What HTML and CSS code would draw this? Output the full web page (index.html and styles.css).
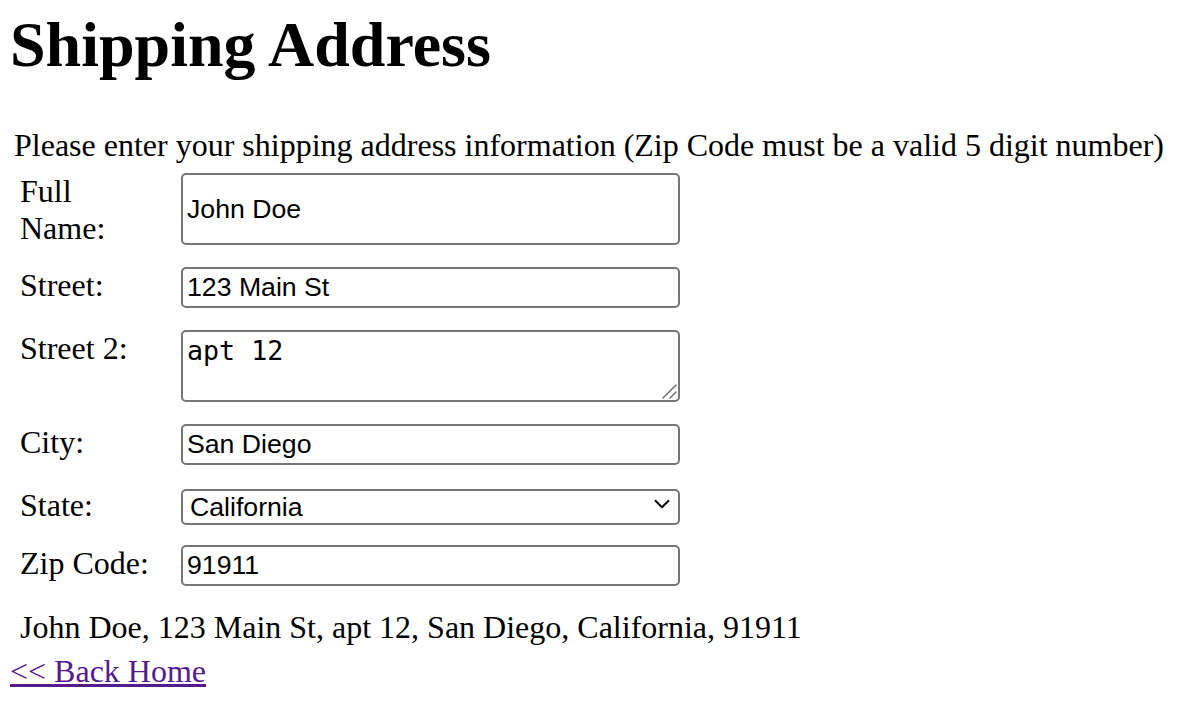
FILE: index.html
```html
<!DOCTYPE html>
<html lang="en">
<head>
<meta charset="utf-8">
<title>Shipping Address</title>
<link rel="stylesheet" href="styles.css">
</head>
<body>
<main class="page">
  <h1 class="title">Shipping Address</h1>
  <p class="intro">Please enter your shipping address information (Zip Code must be a valid 5 digit number)</p>
  <form class="address-form">
    <label class="field-label" for="full-name">Full Name:</label>
    <input id="full-name" class="field" type="text" value="John Doe">

    <label class="field-label" for="street">Street:</label>
    <input id="street" class="field" type="text" value="123 Main St">

    <label class="field-label" for="street2">Street 2:</label>
    <div class="area-wrap">
      <textarea id="street2" class="field field-area">apt 12</textarea>
      <svg class="grip" width="16" height="16" viewBox="0 0 16 16" aria-hidden="true"><path d="M2 15 L15 2 M9 15 L15 9" fill="none" stroke="#6e6e6e" stroke-width="1.5" stroke-linecap="round"/></svg>
    </div>

    <label class="field-label" for="city">City:</label>
    <input id="city" class="field" type="text" value="San Diego">

    <label class="field-label" for="state">State:</label>
    <div class="select-wrap">
      <select id="state" class="field field-select">
        <option>California</option>
      </select>
      <svg class="chevron" width="16" height="10" viewBox="0 0 16 10" aria-hidden="true"><path d="M1.5 1.8 L8 8.2 L14.5 1.8" fill="none" stroke="#000" stroke-width="1.9" stroke-linecap="round" stroke-linejoin="round"/></svg>
    </div>

    <label class="field-label" for="zip">Zip Code:</label>
    <input id="zip" class="field" type="text" value="91911">
  </form>
  <p class="summary">John Doe, 123 Main St, apt 12, San Diego, California, 91911</p>
  <p class="back"><a class="back-link" href="#">&lt;&lt; Back Home</a></p>
</main>
</body>
</html>
```

FILE: styles.css
```css
body {
  margin: 0;
  background: #fff;
  color: #000;
  font-family: "Liberation Serif", "Times New Roman", serif;
  font-size: 32px;
}

.page {
  padding: 8px 0 0 10px;
}

.title {
  margin: 0 0 45px;
  font-size: 64px;
  font-weight: bold;
  line-height: 74px;
}

.intro {
  margin: 0 0 9px 4px;
  line-height: 37px;
}

.address-form {
  display: grid;
  grid-template-columns: 132px 499px;
  grid-template-rows: 72px 41px 72px 41px 36px 41px;
  column-gap: 29px;
  row-gap: 22px;
  padding-left: 10px;
}

.field-label {
  align-self: start;
  line-height: 37px;
}

.field {
  box-sizing: border-box;
  width: 100%;
  height: 100%;
  margin: 0;
  padding: 0 4px;
  border: 2px solid #767676;
  border-radius: 5px;
  background: #fff;
  color: #000;
  font-family: "Liberation Sans", Arial, sans-serif;
  font-size: 26.67px;
}

.area-wrap {
  position: relative;
}

.field-area {
  display: block;
  padding: 3px 4px;
  font-family: "DejaVu Sans Mono", monospace;
  line-height: normal;
  resize: none;
}

.grip {
  position: absolute;
  right: 3px;
  bottom: 3px;
  pointer-events: none;
}

.select-wrap {
  position: relative;
}

.field-select {
  appearance: none;
  -webkit-appearance: none;
  padding: 0 30px 0 7px;
}

.chevron {
  position: absolute;
  top: 12px;
  right: 10px;
  pointer-events: none;
}

.summary {
  margin: 23px 0 0 10px;
  line-height: 37px;
}

.back {
  margin: 7px 0 0;
  line-height: 37px;
}

.back-link {
  color: #551a8b;
}
```
